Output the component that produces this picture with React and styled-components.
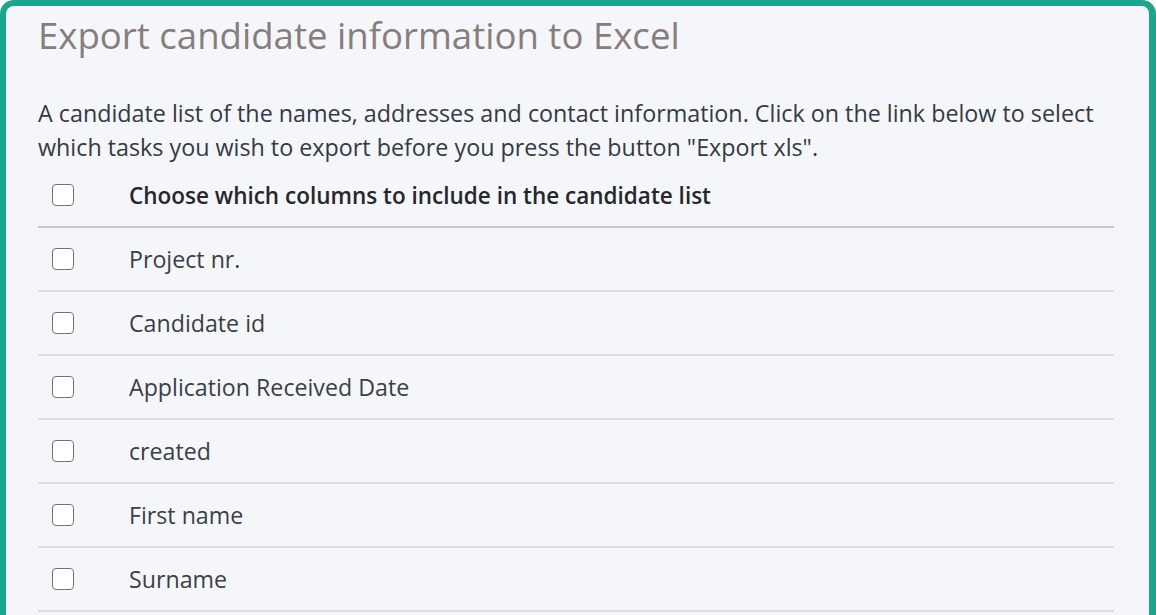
import React from "react"
import styled, { createGlobalStyle } from "styled-components"

const GlobalStyle = createGlobalStyle`
  html, body {
    margin: 0;
    padding: 0;
    background: #ffffff;
  }
  body {
    font-family: "Open Sans", "Noto Sans", sans-serif;
    overflow: hidden;
  }
`;

const Panel = styled.div`
  box-sizing: border-box;
  width: 1156px;
  height: 615px;
  border: 6px solid #1ba68b;
  border-right-width: 7px;
  border-bottom: none;
  border-radius: 14px 14px 0 0;
  background: #f5f6fa;
  padding: 6px 35px 0 32px;
  overflow: hidden;
`;

const Title = styled.h1`
  margin: 0;
  font-size: 36.6px;
  font-weight: 400;
  line-height: 46px;
  color: #877d7d;
`;

const Intro = styled.p`
  margin: 38px 0 0;
  font-size: 23.3px;
  line-height: 34px;
  color: #333a44;
`;

const Table = styled.div`
  display: flex;
  flex-direction: column;
  width: 1076px;
`;

const Row = styled.label`
  display: flex;
  align-items: center;
  height: 62px;
  border-bottom: ${props => (props.header ? "2px solid #c5c7cb" : "2px solid #dcdee2")};
`;

const CheckCell = styled.div`
  width: 91px;
  flex-shrink: 0;
  display: flex;
  padding-left: 14px;
  box-sizing: border-box;
`;

const Box = styled.span`
  display: block;
  box-sizing: border-box;
  width: 22px;
  height: 22px;
  border: 1.5px solid #6e7278;
  border-radius: 4px;
  background: #ffffff;
`;

const Label = styled.span`
  font-size: ${props => (props.header ? "22.5px" : "23.2px")};
  color: ${props => (props.header ? "#25272b" : "#3a3f47")};
  font-weight: ${props => (props.header ? 600 : 400)};
`;

const columns = [
  "Project nr.",
  "Candidate id",
  "Application Received Date",
  "created",
  "First name",
  "Surname",
];

const App = () => {
  return (
    <>
      <GlobalStyle />
      <Panel>
        <Title>Export candidate information to Excel</Title>
        <Intro>
          A candidate list of the names, addresses and contact information. Click on the link below to select
          which tasks you wish to export before you press the button "Export xls".
        </Intro>
        <Table>
          <Row header>
            <CheckCell><Box /></CheckCell>
            <Label header>Choose which columns to include in the candidate list</Label>
          </Row>
          {columns.map(col => (
            <Row key={col}>
              <CheckCell><Box /></CheckCell>
              <Label>{col}</Label>
            </Row>
          ))}
        </Table>
      </Panel>
    </>
  );
};

export default App;
